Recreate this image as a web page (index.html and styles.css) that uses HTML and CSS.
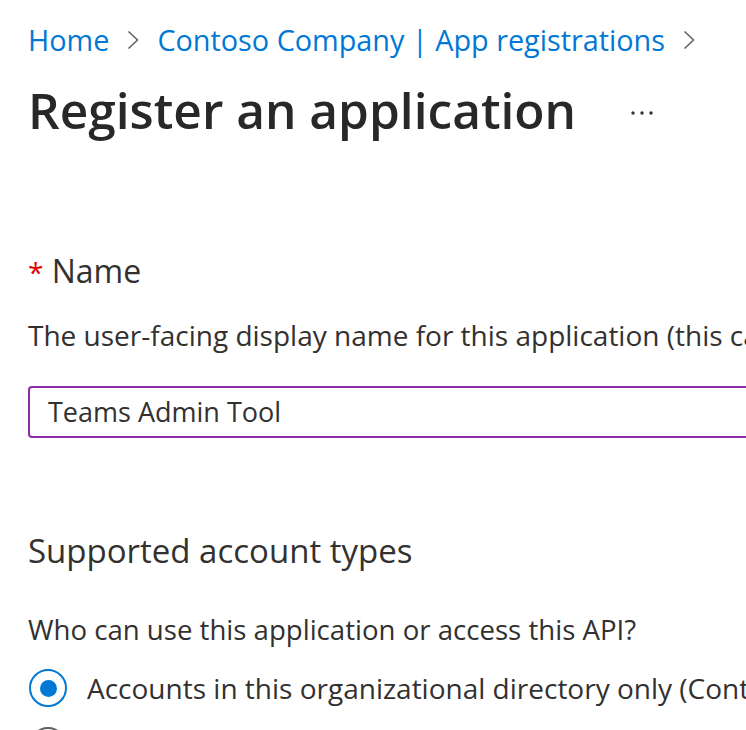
FILE: index.html
```html
<!DOCTYPE html>
<html lang="en">
<head>
<meta charset="utf-8">
<title>Register an application</title>
<link rel="stylesheet" href="styles.css">
</head>
<body>
<main class="page">
  <nav class="breadcrumb">
    <a class="crumb" href="#">Home</a>
    <svg class="chev" viewBox="0 0 12 20" width="12" height="20"><path d="M1.5 1.5 L10.5 10 L1.5 18.5" fill="none" stroke="#605e5c" stroke-width="1.5"/></svg>
    <a class="crumb" href="#">Contoso Company | App registrations</a>
    <svg class="chev" viewBox="0 0 12 20" width="12" height="20"><path d="M1.5 1.5 L10.5 10 L1.5 18.5" fill="none" stroke="#605e5c" stroke-width="1.5"/></svg>
  </nav>
  <header class="title-row">
    <h1 class="title">Register an application</h1>
    <svg class="more" viewBox="0 0 24 6" width="24" height="6"><circle cx="3" cy="3" r="1.7" fill="#323130"/><circle cx="12" cy="3" r="1.7" fill="#323130"/><circle cx="21" cy="3" r="1.7" fill="#323130"/></svg>
  </header>

  <section class="field">
    <h2 class="label"><span class="req">*</span> Name</h2>
    <p class="desc">The user-facing display name for this application (this can be changed later).</p>
    <div class="input">Teams Admin Tool</div>
  </section>

  <section class="field accounts">
    <h2 class="label">Supported account types</h2>
    <p class="desc question">Who can use this application or access this API?</p>
    <div class="radio-row first">
      <span class="radio checked"></span>
      <span class="radio-text">Accounts in this organizational directory only (Contoso Company only - Single tenant)</span>
    </div>
    <div class="radio-row">
      <span class="radio"></span>
      <span class="radio-text">Accounts in any organizational directory (Any Microsoft Entra ID tenant - Multitenant)</span>
    </div>
  </section>
</main>
</body>
</html>
```

FILE: styles.css
```css
html, body {
  margin: 0;
  padding: 0;
  background: #ffffff;
  overflow: hidden;
}
body {
  font-family: "Open Sans", "Noto Sans", sans-serif;
  color: #323130;
}
.page {
  padding: 20px 0 0 28px;
  display: flex;
  flex-direction: column;
  white-space: nowrap;
}
.breadcrumb {
  display: flex;
  align-items: center;
  gap: 18px;
  height: 40px;
}
.crumb {
  color: #0078d4;
  text-decoration: none;
  font-size: 28.8px;
  line-height: 40px;
}
.chev {
  display: block;
}
.title-row {
  display: flex;
  align-items: center;
  margin-top: 18px;
}
.title {
  margin: 0;
  font-size: 49.6px;
  font-weight: 600;
  line-height: 64px;
  color: #292827;
}
.more {
  margin-left: 54px;
  margin-top: 6px;
}
.field {
  display: flex;
  flex-direction: column;
}
.label {
  margin: 0;
  font-size: 32px;
  font-weight: 400;
  line-height: 44px;
}
.req {
  color: #e50000;
  font-size: 28px;
}
.field:first-of-type .label {
  margin-top: 107px;
}
.desc {
  margin: 21px 0 0;
  font-size: 28px;
  line-height: 40px;
}
.input {
  margin-top: 31px;
  width: 900px;
  height: 52px;
  box-sizing: border-box;
  border: 2px solid #8a2ca8;
  border-radius: 4px;
  padding-left: 18px;
  font-size: 27px;
  line-height: 48px;
}
.accounts .label {
  margin-top: 91px;
  font-size: 33px;
}
.question {
  margin-top: 36px;
  font-size: 27.6px;
}
.radio-row {
  display: flex;
  align-items: center;
  gap: 20px;
  margin-top: 18px;
  padding-left: 1px;
}
.radio-row.first {
  margin-top: 19px;
}
.radio {
  width: 38px;
  height: 38px;
  box-sizing: border-box;
  border: 2.5px solid #605e5c;
  border-radius: 50%;
  display: flex;
  align-items: center;
  justify-content: center;
  flex: none;
}
.radio.checked {
  border-color: #0078d4;
}
.radio.checked::after {
  content: "";
  width: 17px;
  height: 17px;
  border-radius: 50%;
  background: #0078d4;
}
.radio-text {
  font-size: 28px;
  line-height: 40px;
}
```
